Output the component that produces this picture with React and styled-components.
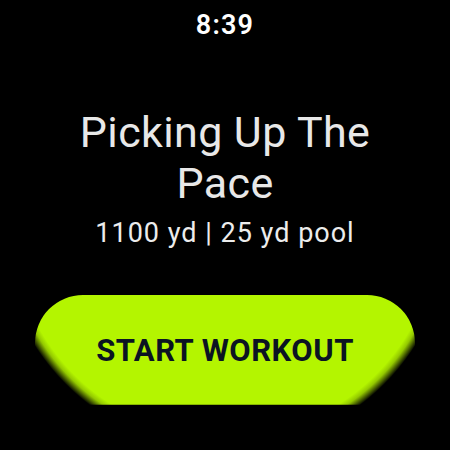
import styled, { createGlobalStyle } from 'styled-components';

const GlobalStyle = createGlobalStyle`
  html, body {
    margin: 0;
    padding: 0;
    background: #000;
  }
  body {
    font-family: Roboto, "Liberation Sans", sans-serif;
  }
`;

// round watch face, clips everything to the circle
const Screen = styled.div`
  width: 450px;
  height: 450px;
  border-radius: 50%;
  overflow: hidden;
  background: #000;
  display: flex;
  flex-direction: column;
  align-items: center;
`;

const Clock = styled.div`
  margin-top: 10px;
  font-size: 27px;
  line-height: 30px;
  font-weight: 600;
  color: #fff;
  letter-spacing: 1.2px;
`;

const Title = styled.h1`
  margin: 67px 0 0;
  width: 340px;
  text-align: center;
  font-size: 43px;
  line-height: 51px;
  font-weight: 400;
  letter-spacing: 0.4px;
  color: #e8e8e8;
`;

const Meta = styled.div`
  margin-top: 9px;
  font-size: 27px;
  line-height: 31px;
  letter-spacing: 1px;
  color: #ececec;
`;

/*
 * Button bottom gets cut by the watch circle (r = 225, centre of screen),
 * the gradient fakes the dark rim along that cut.
 * Centre relative to button: (225 - 35, 225 - 296)
 */
const StartButton = styled.button`
  margin-top: 46px;
  width: 380px;
  height: 110px;
  flex-shrink: 0;
  border: none;
  border-radius: 48px;
  display: flex;
  align-items: center;
  justify-content: center;
  background: radial-gradient(
    circle at 190px -71px,
    #b4f500 0,
    #b4f500 213px,
    #93c800 218px,
    #3a4d00 223px,
    #0b1000 225.5px
  );
  box-shadow: inset 0 -1px 0 rgba(0, 0, 0, 0.25);
  font-family: Roboto, "Liberation Sans", sans-serif;
  font-size: 31px;
  font-weight: 700;
  letter-spacing: 0.5px;
  color: #0b1422;
  cursor: pointer;
`;

export default function App() {
  return (
    <>
      <GlobalStyle />
      <Screen>
        <Clock>8:39</Clock>
        <Title>Picking Up The Pace</Title>
        <Meta>1100 yd | 25 yd pool</Meta>
        <StartButton>START WORKOUT</StartButton>
      </Screen>
    </>
  );
}
